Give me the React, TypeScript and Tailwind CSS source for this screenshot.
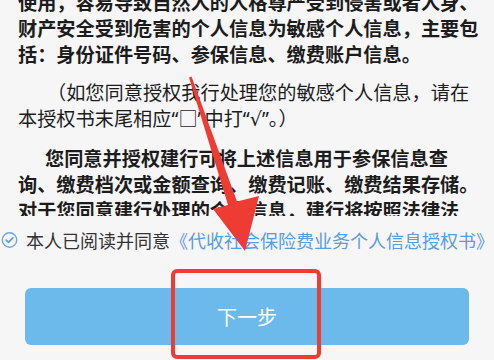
import React from "react";

const CheckCircle = () => (
  <svg width="24" height="24" viewBox="0 0 24 24" fill="none">
    <circle cx="12" cy="12" r="10.2" stroke="#6ea9de" strokeWidth="2" />
    <path d="M7.3 12.2l3.2 3.1 6.2-6.3" stroke="#5b9be0" strokeWidth="2.4" strokeLinecap="round" strokeLinejoin="round" />
  </svg>
);

// red markup drawn over the screenshot
const Annotation = () => (
  <svg className="pointer-events-none absolute inset-0" width="494" height="360" viewBox="0 0 494 360">
    <polygon
      points="189,77.5 228,205 213,209 245,251 259,196 237,201.5 191.5,76.5"
      fill="#ee3b33"
      strokeLinejoin="round"
    />
    <rect x="173" y="271" width="146" height="86" rx="4" fill="none" stroke="#ee3b33" strokeWidth="4" />
  </svg>
);

const Q = ({ children }: { children: React.ReactNode }) => (
  <span className="font-['Noto_Sans','DejaVu_Sans',sans-serif]">{children}</span>
);

const App = () => {
  return (
    <div className="relative flex h-[360px] w-[494px] flex-col overflow-hidden bg-[#f6f6f7] font-['Noto_Sans_CJK_SC',sans-serif]">
      <div className="h-[216px] shrink-0 overflow-hidden">
        <div className="-mt-[11px] flex flex-col gap-[12px] pl-[18px] text-[19.2px] leading-[26px] whitespace-nowrap text-[#1c1c1c]">
          <p className="font-bold">
            使用，容易导致自然人的人格尊严受到侵害或者人身、
            <br />
            财产安全受到危害的个人信息为敏感个人信息，主要包
            <br />
            括：身份证件号码、参保信息、缴费账户信息。
          </p>
          <p className="font-normal">
            <span className="pl-[29px]">（如您同意授权我行处理您的敏感个人信息，请在</span>
            <br />
            本授权书末尾相应<Q>“</Q>□<Q>”</Q>中打<Q>“√”</Q>。）
          </p>
          <p className="mt-[1px] font-bold">
            <span className="pl-[27px]">您同意并授权建行可将上述信息用于参保信息查</span>
            <br />
            询、缴费档次或金额查询、缴费记账、缴费结果存储。
            <br />
            对于您同意建行处理的个人信息，建行将按照法律法
          </p>
        </div>
      </div>

      <div className="flex flex-1 flex-col bg-[#f6f6f7]">
        <div className="mt-[12px] flex h-[24px] items-center whitespace-nowrap pl-[1px] text-[18px] leading-[24px]">
          <CheckCircle />
          <span className="ml-[8px] text-[#333333]">本人已阅读并同意</span>
          <span className="text-[#5b9be0]">《代收社会保险费业务个人信息授权书》</span>
        </div>
        <div className="mt-[36px] px-[25px]">
          <button
            type="button"
            className="flex h-[57px] w-full items-center justify-center rounded-[6px] bg-[#6cb9eb] text-[20px] text-white"
          >
            下一步
          </button>
        </div>
      </div>

      <Annotation />
    </div>
  );
};

export default App;
